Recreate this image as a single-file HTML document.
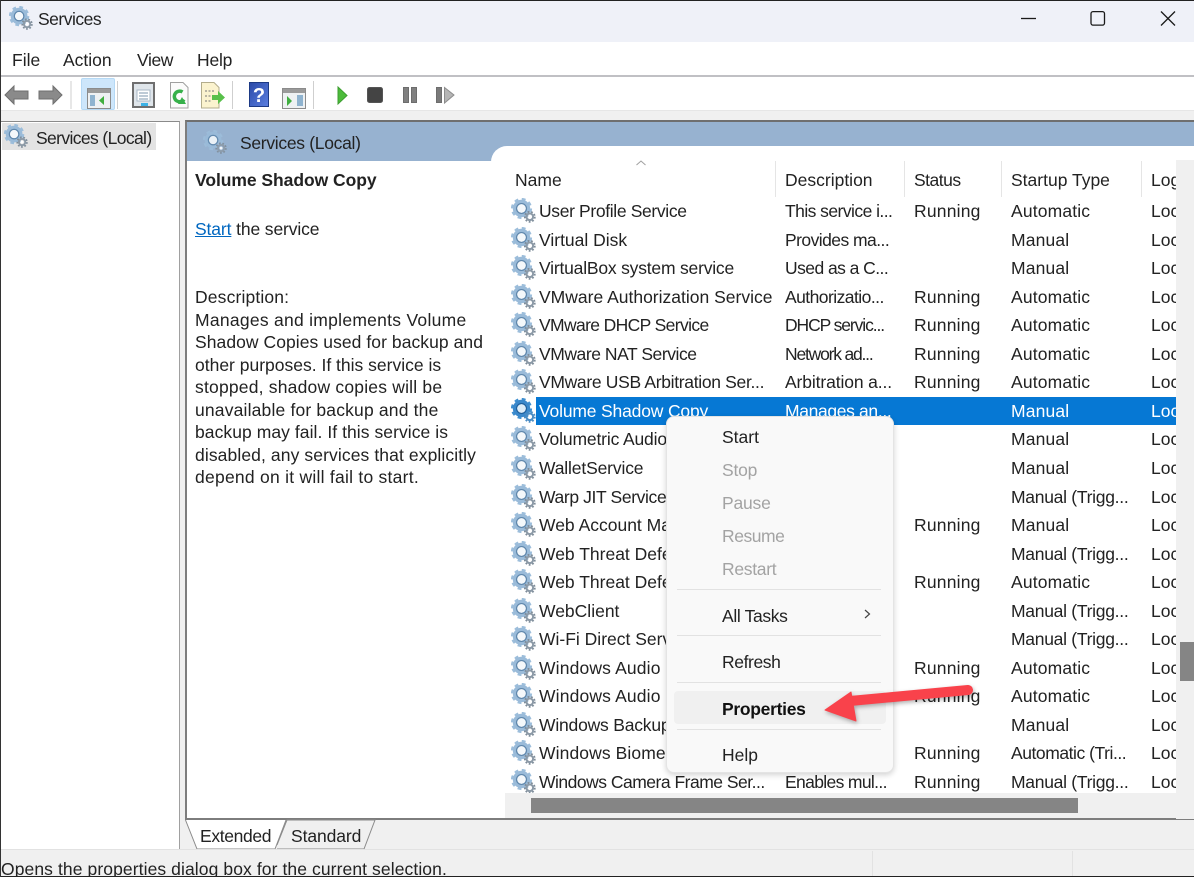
<!DOCTYPE html>
<html><head><meta charset="utf-8"><title>Services</title>
<style>
html,body{margin:0;padding:0;background:#fff}
#w{position:relative;width:1194px;height:877px;overflow:hidden;background:#fff;font-family:"Liberation Sans",sans-serif;font-size:17.5px;color:#222}
#w div,#w span,#w svg{position:absolute}
.t{white-space:nowrap;line-height:22px;height:22px}
#rows{left:505px;top:197px;width:671px;height:596px;overflow:hidden}
.r{left:0;width:671px;height:29px}
.r span{top:3px;white-space:nowrap;line-height:22px}
.n{left:34px}.d{left:280px;letter-spacing:-.55px}.s{left:409px;letter-spacing:.2px}.u{left:506px;letter-spacing:.15px}.l{left:646px}
.g{left:6px;top:1px;width:26px;height:26px;filter:blur(.3px)}
.m{white-space:nowrap;line-height:22px;height:22px}
.tr{letter-spacing:-.28px}
.dis{color:#a3a3a3}
.sep{left:10px;width:204px;height:1px;background:#e2e2e2}
.p{left:195px;white-space:nowrap;line-height:22px;height:22px}
</style></head><body>
<div id="w">
<svg width="0" height="0" style="left:0;top:0"><defs>
<symbol id="gr" viewBox="0 0 26 26">
<circle cx="10.500" cy="10.500" r="9.300" fill="none" stroke="#9dbedb" stroke-width="2.600" stroke-dasharray="3.800 3.500"/>
<circle cx="10.500" cy="10.500" r="6.800" fill="none" stroke="#9abbd9" stroke-width="3.800"/>
<circle cx="10.500" cy="10.500" r="4.900" fill="none" stroke="#5f87ac" stroke-width="1.300"/>
<circle cx="10.500" cy="10.500" r="4.200" fill="#f4f8fb"/>
<circle cx="18.800" cy="18.800" r="5" fill="none" stroke="#7f8d9a" stroke-width="1.800" stroke-dasharray="1.800 1.730"/>
<circle cx="18.800" cy="18.800" r="3.300" fill="none" stroke="#8c9aa7" stroke-width="2"/>
<circle cx="18.800" cy="18.800" r="1.500" fill="#fff"/>
</symbol>
<symbol id="gs" viewBox="0 0 26 26">
<circle cx="10.500" cy="10.500" r="9.300" fill="none" stroke="#3f8fd0" stroke-width="2.600" stroke-dasharray="3.800 3.500"/>
<circle cx="10.500" cy="10.500" r="6.800" fill="none" stroke="#3a88cb" stroke-width="3.800"/>
<circle cx="10.500" cy="10.500" r="4.900" fill="none" stroke="#1e5f9c" stroke-width="1.200"/>
<circle cx="10.500" cy="10.500" r="4.200" fill="#dcecf8"/>
<circle cx="18.800" cy="18.800" r="5" fill="none" stroke="#4a8cc4" stroke-width="1.800" stroke-dasharray="1.800 1.730"/>
<circle cx="18.800" cy="18.800" r="3.300" fill="none" stroke="#4a8cc4" stroke-width="2"/>
<circle cx="18.800" cy="18.800" r="1.500" fill="#fff"/>
</symbol>
</defs></svg>

<!-- title bar -->
<div style="left:0;top:0;width:1194px;height:42px;background:#eff1f8"></div>
<div style="left:0;top:0;width:1194px;height:1px;background:#222"></div>
<svg style="left:9px;top:6px;filter:blur(.3px)" width="25" height="25"><use href="#gr"/></svg>
<div class="t" style="left:38px;top:8px;letter-spacing:-.5px">Services</div>
<svg style="left:1020px;top:8px" width="170" height="24" fill="none" stroke="#1a1a1a" stroke-width="1.300">
<path d="M1 10.500H16"/><rect x="71" y="3.600" width="13.500" height="13.500" rx="2"/><path d="M141 3.500L155 17.500M155 3.500L141 17.500"/></svg>

<!-- menu -->
<div class="t" style="left:12px;top:49px">File</div>
<div class="t" style="left:63px;top:49px">Action</div>
<div class="t" style="left:137px;top:49px;letter-spacing:-.4px">View</div>
<div class="t" style="left:197px;top:49px;letter-spacing:-.2px">Help</div>
<div style="left:0;top:75px;width:1194px;height:2px;background:#c0c0c4"></div>

<!-- toolbar -->
<div style="left:81px;top:78px;width:34px;height:32px;background:#cde6fb;border:1px solid #b5d9f5;box-sizing:border-box;border-radius:2px"></div>
<svg style="left:0;top:77px;filter:blur(.35px)" width="480" height="33">
<path d="M5 18L14 9V14H28V22H14V27Z" fill="#8a8a8a" stroke="#6f6f6f"/>
<path d="M62 18L53 9V14H39V22H53V27Z" fill="#8a8a8a" stroke="#6f6f6f"/>
<path d="M71 4V32M117.500 4V32M232.500 4V32M313.500 4V32" stroke="#cfcfcf" stroke-width="1"/>
<!-- show/hide tree -->
<rect x="87.500" y="11.500" width="23" height="20" fill="#eef1f3" stroke="#8b8b8b"/><rect x="88" y="12" width="22" height="4" fill="#9a9a9a"/>
<rect x="90" y="18" width="5" height="11" fill="#8fb3cf"/><path d="M104 19V28L99 23.500Z" fill="#3fae3f"/>
<!-- properties -->
<rect x="133" y="6" width="21" height="24" fill="#dfe5ea" stroke="#6f6f6f" stroke-width="2"/><rect x="137" y="13" width="13" height="11" fill="#fff" stroke="#a9b8c6"/><path d="M139 16H148M139 19H148M139 22H148" stroke="#7e97ad"/><rect x="141" y="26" width="7" height="3" fill="#3cb2e6"/>
<!-- refresh -->
<path d="M170.500 5.500H183L188 10.500V31H170.500Z" fill="#fbfbfb" stroke="#a0a0a0"/>
<path d="M184 22.500A5.300 5.300 0 1 1 182.500 15" fill="none" stroke="#36b04a" stroke-width="3.500"/><path d="M178 27L186 27L182 20Z" fill="#36b04a"/>
<!-- export -->
<path d="M201.500 5.500H214L219 10.500V31H201.500Z" fill="#fbf3cf" stroke="#b3ad8c"/>
<path d="M205 14H214M205 19H212M205 24H212" stroke="#777" stroke-dasharray="2 1.500"/>
<path d="M212 18H218V14L225 20.500L218 27V23H212Z" fill="#58c04a"/>
<!-- help -->
<defs><linearGradient id="h" x1="0" y1="0" x2="1" y2="1"><stop offset="0" stop-color="#2a49a8"/><stop offset="1" stop-color="#5b7fe0"/></linearGradient></defs>
<rect x="249.500" y="5.500" width="19" height="24" fill="url(#h)" stroke="#1d3a85"/>
<text x="259" y="25" font-family="Liberation Sans" font-size="20" font-weight="bold" fill="#fff" text-anchor="middle">?</text>
<!-- mmc -->
<rect x="282.500" y="11.500" width="23" height="20" fill="#eef1f3" stroke="#8b8b8b"/><rect x="283" y="12" width="22" height="4" fill="#9a9a9a"/>
<path d="M287 19V29L292 24Z" fill="#3fae3f"/><rect x="297" y="18" width="6" height="11" fill="#8fb3cf"/>
<!-- play etc -->
<path d="M338 10L347 18.500L338 27Z" fill="#4cbb3b" stroke="#3d9e30"/>
<rect x="367.500" y="10.500" width="15" height="15" rx="2" fill="#444" stroke="#555"/>
<rect x="403.500" y="10.500" width="5" height="15" fill="#808080" stroke="#6d6d6d"/><rect x="411.500" y="10.500" width="5" height="15" fill="#808080" stroke="#6d6d6d"/>
<rect x="436.500" y="10.500" width="5" height="15" fill="#7a7a7a" stroke="#6d6d6d"/><path d="M444.500 10.500L454 18L444.500 26Z" fill="#b5b5b5" stroke="#8c8c8c"/>
</svg>

<!-- gray background band -->
<div style="left:0;top:110px;width:1194px;height:767px;background:#f0f0f0"></div>
<div style="left:0;top:110px;width:1194px;height:1px;background:#e6e6e6"></div>

<!-- left tree -->
<div style="left:1px;top:121px;width:178px;height:727px;background:#fff;border-right:1px solid #a0a0a0;border-top:1px solid #8a8a8a;border-bottom:1px solid #8a8a8a"></div>
<div style="left:2px;top:123px;width:154px;height:27px;background:#e3e3e3"></div>
<svg style="left:4px;top:124px;filter:blur(.3px)" width="25" height="25"><use href="#gr"/></svg>
<div class="t" style="left:36px;top:127px;letter-spacing:-.62px">Services (Local)</div>

<!-- right panel -->
<div style="left:185px;top:120px;width:1009px;height:699px;background:#fff;border-top:2px solid #6f6f6f;border-left:2px solid #7d7d7d;border-bottom:1px solid #7d7d7d;box-sizing:border-box"></div>
<div style="left:187px;top:122px;width:1007px;height:39px;background:#97b2d0"></div>
<div style="left:491px;top:146px;width:703px;height:20px;background:#fff;border-top-left-radius:16px"></div>
<svg style="left:203px;top:130px;filter:blur(.3px);opacity:.9" width="25" height="25"><use href="#gr"/></svg>
<div class="t" style="left:240px;top:131.500px;letter-spacing:-.3px">Services (Local)</div>

<!-- description pane -->
<div class="p" style="top:169px;font-weight:bold;letter-spacing:-.05px">Volume Shadow Copy</div>
<div class="p" style="top:218px;letter-spacing:-.12px"><u style="color:#0067c0">Start</u> the service</div>
<div class="p" style="top:286px;letter-spacing:.15px">Description:</div>
<div class="p" style="top:308.500px;letter-spacing:.27px">Manages and implements Volume</div>
<div class="p" style="top:331px;letter-spacing:.06px">Shadow Copies used for backup and</div>
<div class="p" style="top:353.500px">other purposes. If this service is</div>
<div class="p" style="top:376px;letter-spacing:.2px">stopped, shadow copies will be</div>
<div class="p" style="top:398.500px;letter-spacing:.17px">unavailable for backup and the</div>
<div class="p" style="top:421px;letter-spacing:.06px">backup may fail. If this service is</div>
<div class="p" style="top:443.500px;letter-spacing:.1px">disabled, any services that explicitly</div>
<div class="p" style="top:466px;letter-spacing:.25px">depend on it will fail to start.</div>

<!-- list header -->
<svg style="left:634px;top:158px" width="14" height="10"><path d="M2.500 7L7 3L11.500 7" fill="none" stroke="#a0a0a0"/></svg>
<div class="t" style="left:515px;top:169px">Name</div>
<div class="t" style="left:785px;top:169px">Description</div>
<div class="t" style="left:914px;top:169px;letter-spacing:-.5px">Status</div>
<div class="t" style="left:1011px;top:169px">Startup Type</div>
<div class="t" style="left:1151px;top:169px;width:25px;overflow:hidden">Log</div>
<div style="left:775px;top:161px;width:1px;height:36px;background:#e5e5e5"></div>
<div style="left:904px;top:161px;width:1px;height:36px;background:#e5e5e5"></div>
<div style="left:1001px;top:161px;width:1px;height:36px;background:#e5e5e5"></div>
<div style="left:1141px;top:161px;width:1px;height:36px;background:#e5e5e5"></div>

<!-- rows -->
<div id="rows">
<div class="r" style="top:0"><svg class="g"><use href="#gr"/></svg><span class="n" style="letter-spacing:-.35px">User Profile Service</span><span class="d">This service i...</span><span class="s">Running</span><span class="u">Automatic</span><span class="l">Local</span></div>
<div class="r" style="top:28.500px"><svg class="g"><use href="#gr"/></svg><span class="n">Virtual Disk</span><span class="d">Provides ma...</span><span class="u">Manual</span><span class="l">Local</span></div>
<div class="r" style="top:57px"><svg class="g"><use href="#gr"/></svg><span class="n" style="letter-spacing:-.2px">VirtualBox system service</span><span class="d">Used as a C...</span><span class="u">Manual</span><span class="l">Local</span></div>
<div class="r" style="top:85.700px"><svg class="g"><use href="#gr"/></svg><span class="n">VMware Authorization Service</span><span class="d">Authorizatio...</span><span class="s">Running</span><span class="u">Automatic</span><span class="l">Local</span></div>
<div class="r" style="top:114.200px"><svg class="g"><use href="#gr"/></svg><span class="n" style="letter-spacing:-.63px">VMware DHCP Service</span><span class="d" style="letter-spacing:-1.1px">DHCP servic...</span><span class="s">Running</span><span class="u">Automatic</span><span class="l">Local</span></div>
<div class="r" style="top:142.800px"><svg class="g"><use href="#gr"/></svg><span class="n" style="letter-spacing:-.45px">VMware NAT Service</span><span class="d" style="letter-spacing:-1.2px">Network ad...</span><span class="s">Running</span><span class="u">Automatic</span><span class="l">Local</span></div>
<div class="r" style="top:171.300px"><svg class="g"><use href="#gr"/></svg><span class="n" style="letter-spacing:-.32px">VMware USB Arbitration Ser...</span><span class="d" style="letter-spacing:-.12px">Arbitration a...</span><span class="s">Running</span><span class="u">Automatic</span><span class="l">Local</span></div>
<div class="r" style="top:199.900px;color:#fff"><div style="left:31px;top:0;width:640px;height:28px;background:#0678d4"></div><svg class="g"><use href="#gs"/></svg><span class="n" style="letter-spacing:-.17px">Volume Shadow Copy</span><span class="d" style="letter-spacing:-.35px">Manages an...</span><span class="u">Manual</span><span class="l">Local</span></div>
<div class="r" style="top:228.400px"><svg class="g"><use href="#gr"/></svg><span class="n" style="letter-spacing:-.15px">Volumetric Audio Compositor</span><span class="u">Manual</span><span class="l">Local</span></div>
<div class="r" style="top:257px"><svg class="g"><use href="#gr"/></svg><span class="n" style="letter-spacing:-.15px">WalletService</span><span class="u">Manual</span><span class="l">Local</span></div>
<div class="r" style="top:285.500px"><svg class="g"><use href="#gr"/></svg><span class="n" style="letter-spacing:-.37px">Warp JIT Service</span><span class="u tr">Manual (Trigg...</span><span class="l">Local</span></div>
<div class="r" style="top:314px"><svg class="g"><use href="#gr"/></svg><span class="n">Web Account Manager</span><span class="s">Running</span><span class="u">Manual</span><span class="l">Local</span></div>
<div class="r" style="top:342.600px"><svg class="g"><use href="#gr"/></svg><span class="n">Web Threat Defense Service</span><span class="u tr">Manual (Trigg...</span><span class="l">Local</span></div>
<div class="r" style="top:371.100px"><svg class="g"><use href="#gr"/></svg><span class="n">Web Threat Defense User</span><span class="s">Running</span><span class="u">Automatic</span><span class="l">Local</span></div>
<div class="r" style="top:399.700px"><svg class="g"><use href="#gr"/></svg><span class="n">WebClient</span><span class="u tr">Manual (Trigg...</span><span class="l">Local</span></div>
<div class="r" style="top:428.200px"><svg class="g"><use href="#gr"/></svg><span class="n">Wi-Fi Direct Services</span><span class="u tr">Manual (Trigg...</span><span class="l">Local</span></div>
<div class="r" style="top:456.800px"><svg class="g"><use href="#gr"/></svg><span class="n" style="letter-spacing:.15px">Windows Audio</span><span class="s">Running</span><span class="u">Automatic</span><span class="l">Local</span></div>
<div class="r" style="top:485.300px"><svg class="g"><use href="#gr"/></svg><span class="n" style="letter-spacing:.15px">Windows Audio Endpoint</span><span class="s">Running</span><span class="u">Automatic</span><span class="l">Local</span></div>
<div class="r" style="top:513.900px"><svg class="g"><use href="#gr"/></svg><span class="n" style="letter-spacing:-.2px">Windows Backup</span><span class="u">Manual</span><span class="l">Local</span></div>
<div class="r" style="top:542.400px"><svg class="g"><use href="#gr"/></svg><span class="n" style="letter-spacing:.1px">Windows Biometric Service</span><span class="s">Running</span><span class="u" style="letter-spacing:-.45px">Automatic (Tri...</span><span class="l">Local</span></div>
<div class="r" style="top:571px"><svg class="g"><use href="#gr"/></svg><span class="n" style="letter-spacing:-.5px">Windows Camera Frame Ser...</span><span class="d" style="letter-spacing:-.65px">Enables mul...</span><span class="s">Running</span><span class="u tr">Manual (Trigg...</span><span class="l">Local</span></div>
</div>

<!-- scrollbars -->
<div style="left:1176px;top:160px;width:18px;height:659px;background:#f0f0f0"></div>
<div style="left:1180px;top:642px;width:14px;height:39px;background:#858585"></div>
<div style="left:505px;top:793px;width:689px;height:25px;background:#f0f0f0"></div>
<div style="left:531px;top:798px;width:547px;height:15px;background:#858585"></div>

<!-- tabs -->
<div style="left:185px;top:819px;width:1009px;height:1px;background:#7d7d7d"></div>
<svg style="left:185px;top:819px" width="200" height="31">
<path d="M0.500 1L12 30H90L101 1" fill="#fff" stroke="#8a8a8a"/>
<path d="M92 30H179L190 1H102L92 26" fill="#f0f0f0" stroke="#8a8a8a"/>
<path d="M0 0H200" stroke="#7d7d7d"/>
</svg>
<div class="t" style="left:200px;top:825px;letter-spacing:-.35px">Extended</div>
<div class="t" style="left:291px;top:825px;letter-spacing:-.1px">Standard</div>

<!-- status bar -->
<div style="left:0;top:849px;width:1194px;height:1px;background:#e2e2e2"></div>
<div style="left:872px;top:851px;width:1px;height:26px;background:#e2e2e2"></div>
<div style="left:1072px;top:851px;width:1px;height:26px;background:#e2e2e2"></div>
<div class="t" style="left:1px;top:858px;letter-spacing:.09px">Opens the properties dialog box for the current selection.</div>
<div style="left:0;top:876px;width:1194px;height:1px;background:#222"></div>
<div style="left:0;top:0;width:1px;height:877px;background:#333"></div>

<!-- context menu -->
<div style="left:666px;top:416px;width:228px;height:357px;background:#f9f9f9;border-radius:8px;border:1px solid #e4e4e4;box-sizing:border-box;box-shadow:0 2px 6px rgba(0,0,0,.18)">
<div class="m" style="top:9px;left:55px">Start</div>
<div class="m dis" style="top:42px;left:55px;letter-spacing:-.2px">Stop</div>
<div class="m dis" style="top:75px;left:55px;letter-spacing:-.2px">Pause</div>
<div class="m dis" style="top:108px;left:55px;letter-spacing:-.45px">Resume</div>
<div class="m dis" style="top:141px;left:55px;letter-spacing:-.3px">Restart</div>
<div class="sep" style="top:172px"></div>
<div class="m" style="top:187.500px;left:55px;letter-spacing:-.35px">All Tasks</div>
<svg style="left:194px;top:190px" width="12" height="14"><path d="M4 3L8.500 7L4 11" fill="none" stroke="#444" stroke-width="1.200"/></svg>
<div class="sep" style="top:218px"></div>
<div class="m" style="top:234px;left:55px;letter-spacing:-.4px">Refresh</div>
<div class="sep" style="top:265px"></div>
<div style="left:7px;top:274px;width:212px;height:33px;background:#f0f0f0;border-radius:4px"></div>
<div class="m" style="top:280.500px;left:55px;font-weight:bold;color:#111;letter-spacing:-.3px">Properties</div>
<div class="sep" style="top:312px"></div>
<div class="m" style="top:327px;left:55px">Help</div>
</div>

<!-- arrow -->
<svg style="left:815px;top:680px;filter:drop-shadow(1px 2px 2px rgba(0,0,0,.3))" width="170" height="50">
<path d="M153 10L35 21" stroke="#f9424b" stroke-width="10" stroke-linecap="round" fill="none"/>
<path d="M10 30L36 12L41 41Z" fill="#f9424b" stroke="#f9424b" stroke-linejoin="round"/>
</svg>
</div>
</body></html>
